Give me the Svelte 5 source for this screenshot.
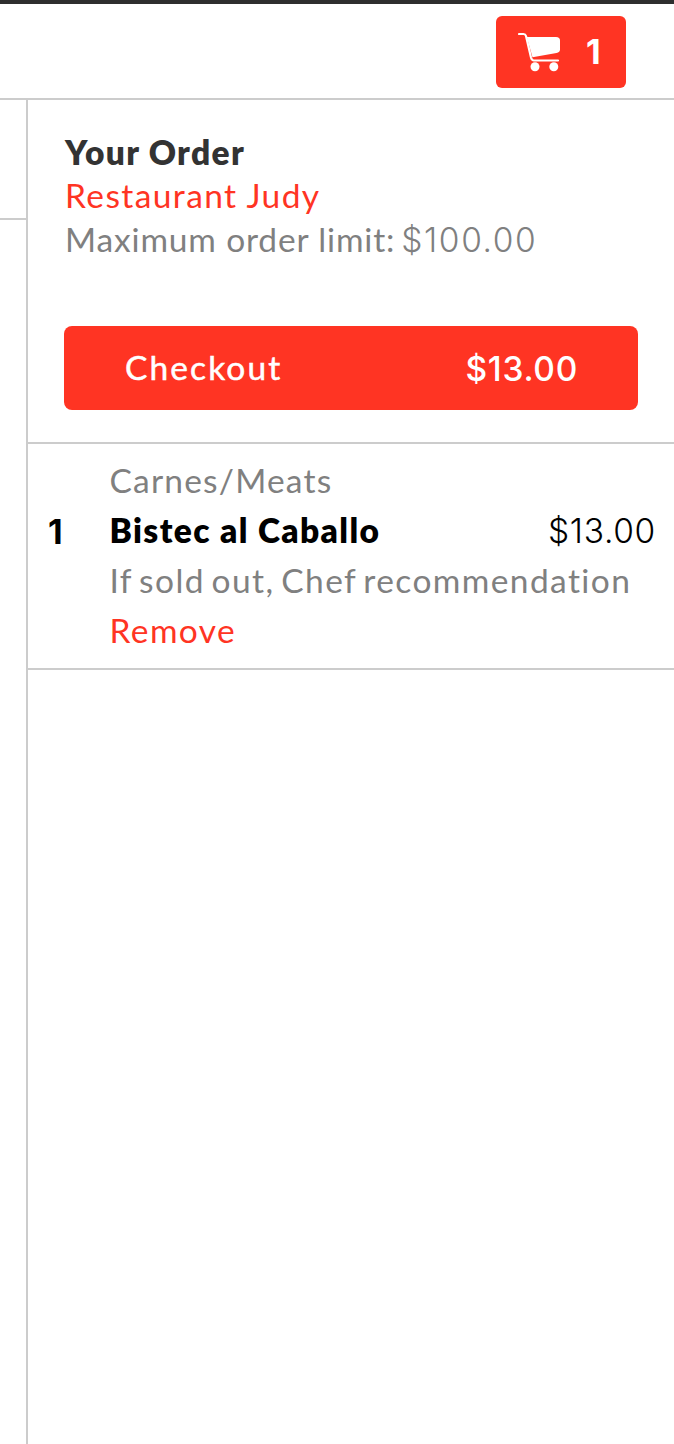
<script>
  const item = {
    count: 1,
    category: 'Carnes/Meats',
    name: 'Bistec al Caballo',
    price: '$13.00',
    note: 'If sold out, Chef recommendation'
  };
</script>

<div class="page">
  <header>
    <button class="cart" aria-label="Cart">
      <svg width="42" height="40" viewBox="0 0 42 40" aria-hidden="true">
        <path d="M1 2H5.5Q7.4 2 8 4L13 25.5Q13.8 28.5 16 28.5H40" fill="none" stroke="#fff" stroke-width="2.2" stroke-linecap="round" />
        <path d="M8.8 5H38Q42 5 42 8.5V17.5Q42 20.3 38.5 21L14.5 25.2Z" fill="#fff" />
        <circle cx="17" cy="34.7" r="4.5" fill="#fff" />
        <circle cx="35.8" cy="34.7" r="4.5" fill="#fff" />
      </svg>
      <span class="cart-count">{item.count}</span>
    </button>
  </header>

  <div class="body">
    <div class="menu-edge"><div class="menu-top"></div></div>
    <aside>
      <section class="summary">
        <h1>Your Order</h1>
        <p class="restaurant">Restaurant Judy</p>
        <p class="limit"><span>Maximum order limit:</span><span class="num">$100.00</span></p>
        <button class="checkout">
          <span class="label">Checkout</span>
          <span class="num">{item.price}</span>
        </button>
      </section>
      <section class="item">
        <div class="qty">{item.count}</div>
        <div class="details">
          <div class="category">{item.category}</div>
          <div class="line">
            <strong>{item.name}</strong>
            <span class="num price">{item.price}</span>
          </div>
          <div class="note">{item.note}</div>
          <div class="remove">Remove</div>
        </div>
      </section>
    </aside>
  </div>
</div>

<style>
  :global(body) { background: #fff; }
  * { box-sizing: border-box; }
  .page {
    height: 1444px;
    display: flex;
    flex-direction: column;
    overflow: hidden;
    border-top: 4px solid #2e2e2e;
    font-family: Lato, sans-serif;
    font-size: 33.5px;
    font-weight: 400;
    color: #000;
    white-space: nowrap;
  }
  header {
    height: 96px;
    flex: none;
    display: flex;
    justify-content: flex-end;
    padding: 12px 48px 0 0;
    border-bottom: 2px solid #ccc;
  }
  button { border: 0; margin: 0; font: inherit; color: #fff; background: #ff3423; }
  .cart {
    width: 130px;
    height: 72px;
    border-radius: 6px;
    display: flex;
    align-items: flex-start;
    padding: 16px 0 0 22px;
  }
  .cart-count {
    font: 700 34px/40px Inter, sans-serif;
    margin-left: 26px;
  }
  .body { flex: 1; display: flex; }
  .menu-edge { width: 28px; flex: none; border-right: 2px solid #ccc; }
  .menu-top { height: 120px; border-bottom: 2px solid #ccc; }
  aside { flex: 1; min-width: 0; }
  .summary {
    height: 344px;
    padding: 30px 36px 0 37px;
    line-height: 44px;
    border-bottom: 2px solid #ccc;
  }
  h1, p { margin: 0; font-size: inherit; }
  h1 { height: 43px; color: #333; font-weight: 800; letter-spacing: 1.35px; }
  .restaurant, .remove { color: #ff3423; letter-spacing: 1.4px; }
  .limit, .category, .note { color: #808080; letter-spacing: 1.2px; }
  .limit { display: flex; height: 44px; letter-spacing: 0.85px; }
  .note { letter-spacing: 1.4px; word-spacing: -3.2px; }
  .num { font-family: Inter, sans-serif; font-size: 33.5px; font-weight: 300; letter-spacing: 0.7px; margin-right: -1px; padding-top: 1px; }
  .limit .num { letter-spacing: 1.6px; margin-left: 6px; }
  .checkout {
    width: 574px;
    height: 84px;
    margin: 65px 0 0 -1px;
    border-radius: 8px;
    display: flex;
    align-items: center;
    justify-content: space-between;
    padding: 0 61px 1px;
  }
  .label { letter-spacing: 2.1px; margin-top: -1px; -webkit-text-stroke: 0.5px #fff; }
  .checkout .num { font-weight: 500; padding-top: 2px; }
  .item {
    height: 226px;
    display: flex;
    padding: 11px 19px 0 20px;
    line-height: 50px;
    border-bottom: 2px solid #ccc;
  }
  .qty { width: 61.5px; margin-top: 52px; font: 700 34px/50px Inter, sans-serif; }
  .details { flex: 1; min-width: 0; }
  .line { display: flex; justify-content: space-between; height: 50px; }
  strong { font-weight: 800; letter-spacing: 1.38px; }
</style>
